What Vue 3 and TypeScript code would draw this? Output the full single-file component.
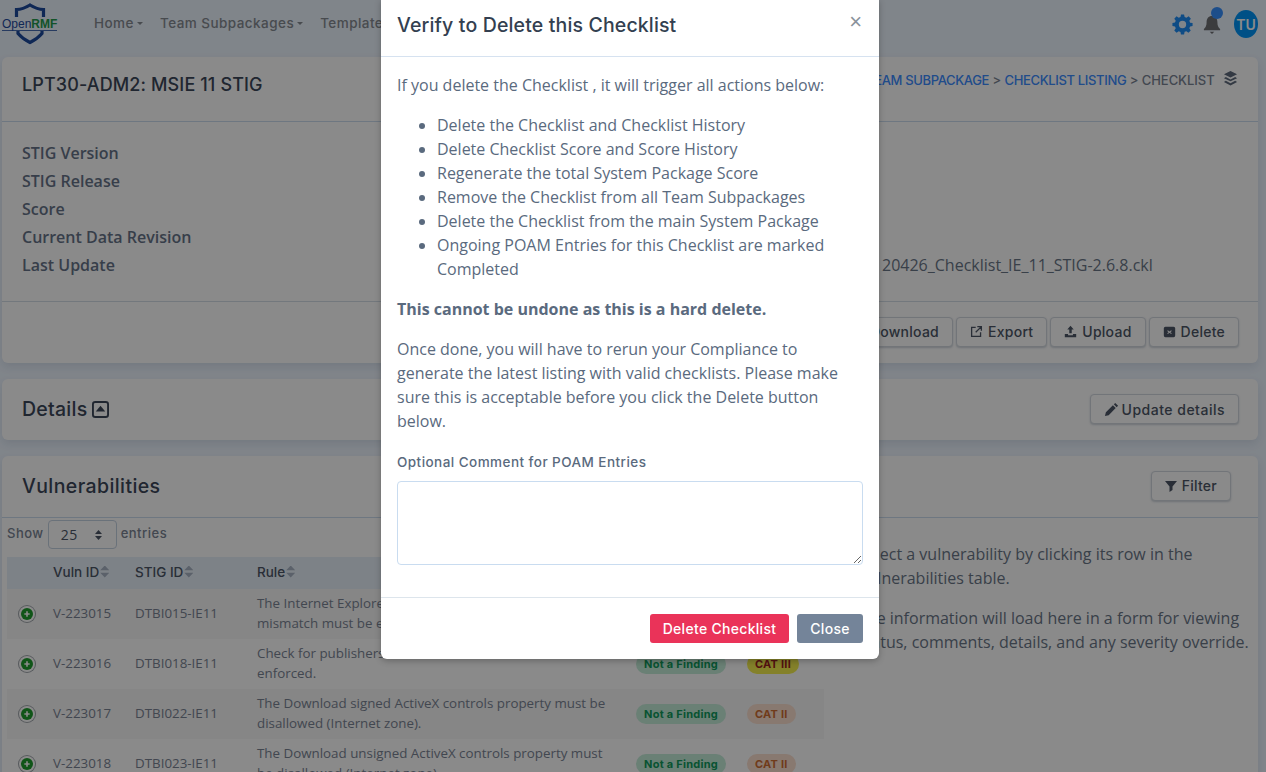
<script setup lang="ts">
const labels = ['STIG Version', 'STIG Release', 'Score', 'Current Data Revision', 'Last Update']
const bullets = [
  'Delete the Checklist and Checklist History',
  'Delete Checklist Score and Score History',
  'Regenerate the total System Package Score',
  'Remove the Checklist from all Team Subpackages',
  'Delete the Checklist from the main System Package',
  'Ongoing POAM Entries for this Checklist are marked Completed',
]
const rows = [
  { v: 'V-223015', s: 'DTBI015-IE11', r: 'The Internet Explorer warning about certificate address mismatch must be enforced.', cat: 'CAT II', c: 'c2' },
  { v: 'V-223016', s: 'DTBI018-IE11', r: 'Check for publishers certificate revocation must be enforced.', cat: 'CAT III', c: 'c3' },
  { v: 'V-223017', s: 'DTBI022-IE11', r: 'The Download signed ActiveX controls property must be disallowed (Internet zone).', cat: 'CAT II', c: 'c2' },
  { v: 'V-223018', s: 'DTBI023-IE11', r: 'The Download unsigned ActiveX controls property must be disallowed (Internet zone).', cat: 'CAT II', c: 'c2' },
]
</script>

<template>
  <div class="page">
    <nav class="nav">
      <svg class="logo" width="60" height="46" viewBox="0 0 60 46">
        <path d="M16.5 17 V9.500 C22 9.500 26 7.500 30 5 C34 7.500 38 9.500 43.500 9.500 V17 M18 31 V33.500 C21 37 25 40 30 42.500 C35 40 39 37 42 33.500 V31" fill="none" stroke="#1d4a9e" stroke-width="3.200"/>
        <path d="M2 30.500 H57" stroke="#1d4a9e" stroke-width="0.800"/>
        <text x="2" y="27.500" class="logo-text">Open<tspan class="logo-green">RMF</tspan></text>
      </svg>
      <div class="nav-links">
        <span class="nav-link">Home<i class="caret"></i></span>
        <span class="nav-link">Team Subpackages<i class="caret"></i></span>
        <span class="nav-link">Templates<i class="caret"></i></span>
      </div>
      <div class="nav-icons">
        <svg class="gear" width="21" height="21" viewBox="0 0 24 24"><path fill="#1c8cf5" fill-rule="evenodd" d="M13.800 .5 14.400 3.400 16.500 4.300 19 2.700 21.600 5.400 19.800 7.700 20.700 9.900 23.500 10.300V13.800L20.700 14.300 19.800 16.300 21.400 18.800 18.800 21.300 16.400 19.600 14.400 20.400 13.800 23.500H10.200L9.700 20.500 7.700 19.700 5.200 21.300 2.600 18.800 4.300 16.300 3.400 14.300 .5 13.700V10.200L3.400 9.800 4.300 7.700 2.600 5.300 5.200 2.700 7.700 4.300 9.700 3.400 10.300 .5ZM12 7.800A4.200 4.200 0 1 0 12 16.200 4.200 4.200 0 0 0 12 7.800Z"/></svg>
        <div class="bell">
          <svg width="18" height="22" viewBox="0 0 20 24"><path fill="#6e7074" d="M10 3C6 3 4 6 4 10 4 14 3 15.500 1 17.500V19H19V17.500C17 15.500 16 14 16 10 16 6 14 3 10 3ZM7.500 20.500H12.500L10 23Z"/></svg>
          <span class="dot"></span>
        </div>
        <span class="avatar">TU</span>
      </div>
    </nav>

    <section class="card">
      <header class="card-head top-head">
        <h2 class="title">LPT30-ADM2: MSIE 11 STIG</h2>
        <div class="crumb">
          <a>TEAM SUBPACKAGE</a> &gt; <a>CHECKLIST LISTING</a> &gt; CHECKLIST
          <svg width="15" height="15" viewBox="0 0 16 16"><path fill="#5e6a7c" d="M8 0 15 3.500 8 7 1 3.500ZM3 6.500 8 9 13 6.500 15 7.700 8 11 1 7.700ZM3 10.500 8 13 13 10.500 15 11.700 8 15.500 1 11.700Z"/></svg>
        </div>
      </header>
      <div class="info">
        <div class="labels">
          <div v-for="l in labels" :key="l">{{ l }}</div>
        </div>
        <div class="values">
          <div>&nbsp;</div><div>&nbsp;</div><div>&nbsp;</div><div>&nbsp;</div>
          <div>20426_Checklist_IE_11_STIG-2.6.8.ckl</div>
        </div>
      </div>
      <footer class="actions">
        <button class="btn">
          <svg width="13" height="13" viewBox="0 0 16 16"><path fill="none" stroke="#4c5666" stroke-width="2" d="M8 1V10M4 7 8 11 12 7M1 14H15"/></svg>
          Download</button>
        <button class="btn">
          <svg width="13" height="13" viewBox="0 0 16 16"><path fill="none" stroke="#4c5666" stroke-width="1.600" d="M7 3H2V14H13V9M9 2H14V7M14 2 7 9"/></svg>
          Export</button>
        <button class="btn">
          <svg width="13" height="13" viewBox="0 0 16 16"><path fill="#4c5666" d="M8 1 12 5.500H9.500V10H6.500V5.500H4ZM1 11H5V12.500H11V11H15V15H1Z"/></svg>
          Upload</button>
        <button class="btn">
          <svg width="13" height="13" viewBox="0 0 16 16"><path fill="#4c5666" fill-rule="evenodd" d="M3 2H13A2 2 0 0 1 15 4V13A2 2 0 0 1 13 15H3A2 2 0 0 1 1 13V4A2 2 0 0 1 3 2ZM6 6.500 5.200 7.300 7 8.800 5.200 10.300 6 11.100 8 9.600 10 11.100 10.800 10.300 9 8.800 10.800 7.300 10 6.500 8 8Z"/></svg>
          Delete</button>
      </footer>
    </section>

    <section class="card">
      <header class="card-head details-head">
        <h2 class="title sub">Details
          <svg width="17" height="17" viewBox="0 0 18 18"><rect x="1" y="1" width="16" height="16" rx="2.500" fill="none" stroke="#3c4759" stroke-width="2"/><path fill="#3c4759" d="M9 5 14 11H4Z"/></svg>
        </h2>
        <button class="btn upd">
          <svg width="15" height="15" viewBox="0 0 16 16"><path fill="#4c5666" d="M12 1 15 4 13.500 5.500 10.500 2.500ZM9.500 3.500 12.500 6.500 5 14 1 15 2 11Z"/></svg>
          Update details</button>
      </header>
    </section>

    <section class="card vuln">
      <header class="card-head vuln-head">
        <h2 class="title sub vt">Vulnerabilities</h2>
        <button class="btn filter">
          <svg width="12" height="12" viewBox="0 0 12 12"><path fill="#4c5666" d="M0 1H12L7.500 6.500V10L4.500 12V6.500Z"/></svg>
          Filter</button>
      </header>
      <div class="split">
        <div class="left">
          <div class="length">
            <span>Show</span>
            <span class="select">25 <svg width="9" height="12" viewBox="0 0 9 12"><path fill="#4c5666" d="M4.500 1 8 5H1ZM4.500 11 1 7H8Z"/></svg></span>
            <span>entries</span>
          </div>
          <table class="tbl">
            <thead>
              <tr>
                <th class="c0"></th>
                <th class="c1">Vuln ID<span class="sort"></span></th>
                <th class="c2h">STIG ID<span class="sort"></span></th>
                <th class="c3h">Rule<span class="sort"></span></th>
                <th class="c4h"></th>
                <th class="c5h"></th>
              </tr>
            </thead>
            <tbody>
              <tr v-for="r in rows" :key="r.v">
                <td class="c0">
                  <span class="plus"><svg viewBox="0 0 12 12"><path stroke="#fff" stroke-width="2.400" d="M6 2V10M2 6H10"/></svg></span>
                </td>
                <td>{{ r.v }}</td>
                <td>{{ r.s }}</td>
                <td class="rule">{{ r.r }}</td>
                <td><span class="pill ok">Not a Finding</span></td>
                <td><span class="pill" :class="r.c">{{ r.cat }}</span></td>
              </tr>
            </tbody>
          </table>
        </div>
        <div class="right">
          <p>Select a vulnerability by clicking its row in the Vulnerabilities table.</p>
          <p>The information will load here in a form for viewing status, comments, details, and any severity override.</p>
        </div>
      </div>
    </section>

    <div class="backdrop"></div>
    <div class="modal">
      <div class="m-head">
        <h3>Verify to Delete this Checklist</h3>
        <span class="x">×</span>
      </div>
      <div class="m-body">
        <p>If you delete the Checklist , it will trigger all actions below:</p>
        <ul>
          <li v-for="b in bullets" :key="b">{{ b }}</li>
        </ul>
        <p><strong>This cannot be undone as this is a hard delete.</strong></p>
        <p>Once done, you will have to rerun your Compliance to generate the latest listing with valid checklists. Please make sure this is acceptable before you click the Delete button below.</p>
        <label>Optional Comment for POAM Entries</label>
        <textarea></textarea>
      </div>
      <div class="m-foot">
        <button class="mb del">Delete Checklist</button>
        <button class="mb close">Close</button>
      </div>
    </div>
  </div>
</template>

<style>
html, body { margin: 0; height: 100%; overflow: hidden; }
</style>

<style scoped>
.page { position: relative; height: 772px; overflow: hidden; background: #edf5ff; padding: 0 8px 0 2px; box-sizing: border-box; font-family: "Open Sans", sans-serif; color: #6a7688; }
.nav { height: 57px; display: flex; align-items: center; padding-bottom: 11px; box-sizing: border-box; }
.logo { margin-left: -2px; align-self: flex-start; flex: none; }
.logo-text { font: 400 12px "Liberation Sans", sans-serif; fill: #1d4a9e; }
.logo-green { fill: #249a4c; font-weight: 700; }
.nav-links { display: flex; gap: 17px; margin-left: 34px; font: 500 13.5px Inter, sans-serif; color: #868b92; letter-spacing: .45px; }
.nav-link { white-space: nowrap; }
.caret { display: inline-block; margin-left: 3px; vertical-align: 3px; border: 3px solid transparent; border-top-color: currentColor; border-bottom: 0; }
.nav-icons { margin-left: auto; display: flex; align-items: center; padding-top: 2px; }
.gear { margin-right: 10px; }
.bell { position: relative; height: 22px; margin-right: 13px; }
.dot { position: absolute; top: -6px; right: -2px; width: 12px; height: 12px; background: #3790ff; border-radius: 50%; }
.avatar { width: 24px; height: 28px; border-radius: 50%; background: #0095f8; color: #fff; font: 600 14px Inter, sans-serif; display: flex; align-items: center; justify-content: center; }

.card { background: #fff; border-radius: 6px; margin-bottom: 16px; box-shadow: 0 4px 8px rgba(60,80,110,.12); }
.card-head { display: flex; justify-content: space-between; border-bottom: 1px solid #cbdcee; padding: 0 20px; box-sizing: border-box; }
.top-head { height: 65px; padding-top: 15px; }
.title { font: 500 18px Inter, sans-serif; letter-spacing: .12px; color: #3c4759; margin: 0; }
.top-head .title { margin-top: 2px; }
.sub { display: flex; align-items: center; gap: 5px; font-size: 19.5px; letter-spacing: .25px; }
.vt { letter-spacing: .4px; }
.crumb { font: 500 13px Inter, sans-serif; letter-spacing: -.05px; color: #7a8494; margin-top: -1px; white-space: nowrap; }
.crumb a { color: #3b8cff; letter-spacing: -.35px; }
.crumb svg { margin-left: 5px; vertical-align: -1px; }
.info { display: flex; height: 180px; padding: 17px 20px 0; box-sizing: border-box; border-bottom: 1px solid #d5dee8; font-size: 16px; line-height: 28px; }
.labels { width: 860px; flex: none; font-weight: 600; color: #677489; }
.values { white-space: nowrap; }
.actions { height: 61px; display: flex; justify-content: flex-end; align-items: center; gap: 3px; padding: 0 19px 2px 0; box-sizing: border-box; }
.btn { height: 30px; background: #fff; border: 1px solid #d2d8df; border-radius: 4px; box-shadow: 0 1px 2px rgba(60,80,110,.25); padding: 0 13px; font: 500 14px Inter, sans-serif; letter-spacing: .25px; color: #4c5666; display: inline-flex; align-items: center; gap: 5px; white-space: nowrap; }
.upd { letter-spacing: .5px; gap: 3px; }
.details-head { height: 61px; align-items: center; border-bottom: 0; padding: 0 19px 1px 20px; }
.vuln { height: 400px; }
.vuln-head { height: 62px; align-items: center; padding: 0 27px 2px 20px; }
.split { display: flex; }
.left { width: 822px; flex: none; padding: 0 0 0 5px; box-sizing: border-box; }
.length { height: 39px; display: flex; align-items: flex-start; gap: 4px; padding-top: 2px; box-sizing: border-box; font: 500 13px Inter, sans-serif; letter-spacing: .5px; color: #7a8494; }
.length > span:not(.select) { line-height: 26px; }
.select { width: 69px; height: 29px; box-sizing: border-box; border: 1px solid #c4d2e2; border-radius: 4px; display: flex; align-items: center; justify-content: space-between; padding: 0 13px 0 12px; font: 400 14px "Open Sans", sans-serif; color: #4c5666; }
.tbl { width: 817px; border-collapse: collapse; table-layout: fixed; font-size: 13.35px; line-height: 20px; color: #7a8494; }
.tbl th { background: #e8f0f9; height: 32px; text-align: left; font: 500 13.5px Inter, sans-serif; color: #4c5666; padding: 0 0 3px; box-sizing: border-box; }
.tbl td { padding: 0 0 2px; height: 50px; box-sizing: border-box; }
.tbl tbody tr:nth-child(odd) td { background: #f7f7f7; }
.c0 { width: 46px; }
.tbl td.c0 { padding-left: 14px; }
.c1 { width: 82px; }
.c2h { width: 122px; }
.c3h { width: 379px; }
.c4h { width: 111px; }
.tbl td.rule { padding-right: 24px; }
.sort { display: inline-block; width: 9px; height: 12px; margin-left: 1px; vertical-align: -1px; background: #a8b4c4; clip-path: polygon(50% 0, 100% 40%, 0 40%, 50% 0, 50% 100%, 0 60%, 100% 60%, 50% 100%); }
.plus { display: inline-flex; width: 12px; height: 12px; margin-top: 1px; background: #1f9d2e; border-radius: 50%; align-items: center; justify-content: center; box-shadow: 0 0 0 2px #fff, 0 0 0 3px #a0a6ac; }
.plus svg { width: 8px; height: 8px; }
.pill { display: inline-block; font: 700 11px Inter, sans-serif; letter-spacing: .25px; border-radius: 10px; padding: 3px 8px; white-space: nowrap; }
.ok { background: #c4ecd9; color: #0f9a5c; }
.c2 { background: #fbdfcf; color: #cf6d33; }
.c3 { background: #f4ef4e; color: #9c2020; }
.right { flex: 1; padding: 24px 0 0 34px; font-size: 16px; line-height: 24px; }
.right p { margin: 0 0 16px; }

.backdrop { position: absolute; inset: 0; background: rgba(0,0,0,.46); }
.modal { position: absolute; left: 381px; top: -1px; width: 498px; height: 660px; background: #fff; border-radius: 0 0 6px 6px; box-shadow: 0 2px 6px rgba(0,0,0,.25); display: flex; flex-direction: column; box-sizing: border-box; }
.m-head { height: 58px; flex: none; display: flex; justify-content: space-between; padding: 14px 16px 0; box-sizing: border-box; border-bottom: 1px solid #d6e2f0; }
.m-head h3 { margin: 0; font: 500 19.5px Inter, sans-serif; color: #333f50; letter-spacing: .15px; }
.x { font: 400 22px "Liberation Sans", sans-serif; color: #8b929b; line-height: 18px; margin-right: 1px; }
.m-body { flex: 1; padding: 16px 16px 0; font-size: 16px; line-height: 24px; color: #5a6a7e; }
.m-body p { margin: 0 0 16px; }
.m-body ul { margin: 0 0 16px; padding-left: 40px; }
.m-body strong { font-weight: 700; }
.m-body label { display: block; font: 500 13.5px Inter, sans-serif; letter-spacing: .45px; color: #5a6a7e; line-height: 16px; margin-top: 21px; margin-bottom: 11px; }
.m-body textarea { display: block; width: 466px; height: 84px; box-sizing: border-box; border: 1px solid #c9dcf0; border-radius: 4px; background: #fff; }
.m-foot { height: 62px; flex: none; display: flex; justify-content: flex-end; align-items: center; gap: 8px; padding: 0 16px; border-top: 1px solid #dde5ec; box-sizing: border-box; }
.mb { height: 29px; border: 0; border-radius: 3px; color: #fff; font: 500 14px Inter, sans-serif; letter-spacing: .3px; padding: 0; white-space: nowrap; }
.del { background: #ea3359; width: 139px; }
.close { background: #748499; width: 66px; }
</style>
